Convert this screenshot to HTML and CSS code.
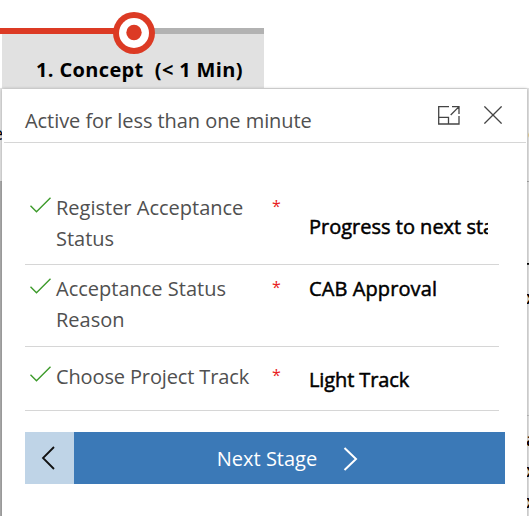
FILE: index.html
```html
<!DOCTYPE html>
<html lang="en">
<head>
    <meta charset="UTF-8">
    <title>Business Process Flow</title>
    <link rel="stylesheet" href="styles.css">
</head>
<body>
    <div class="process-bar">
        <div class="track">
            <div class="track-done"></div>
            <div class="track-rest"></div>
            <svg class="stage-marker" width="42" height="42" viewBox="0 0 42 42">
                <circle cx="21" cy="21" r="21" fill="#dc3a24"/>
                <circle cx="21" cy="21" r="15" fill="#fff"/>
                <circle cx="21" cy="20.5" r="7.7" fill="#dc3a24"/>
            </svg>
        </div>
        <div class="stage"><span class="stage-name">1. Concept&nbsp; (&lt; 1 Min)</span></div>
    </div>

    <div class="form-behind">
        <div class="form-header"><span>e</span><span>e</span></div>
        <div class="form-section">
            <span class="peek peek-1">T</span>
            <span class="peek peek-2">x</span>
            <div class="section-line"></div>
            <span class="peek peek-3">a</span>
            <span class="peek peek-4">x</span>
            <span class="peek peek-5">x</span>
        </div>
    </div>

    <div class="flyout">
        <div class="flyout-header">
            <h1>Active for less than one minute</h1>
            <div class="flyout-actions">
                <svg width="22" height="19" viewBox="0 0 22 19" fill="none" stroke="#444" stroke-width="1.3">
                    <path d="M11 .7H.7V18H21V10M.7 11.3H10.5V18M14 .7H21V8M20.8 .9L12.7 9"/>
                </svg>
                <svg width="18" height="18" viewBox="0 0 18 18" fill="none" stroke="#444" stroke-width="1.3">
                    <path d="M.4 .4L17.6 17.6M17.6 .4L.4 17.6"/>
                </svg>
            </div>
        </div>

        <div class="fields">
            <div class="field">
                <svg class="check" width="21" height="16" viewBox="0 0 21 16" fill="none" stroke="#3c9a2a" stroke-width="1.4">
                    <path d="M.5 8.7L6.5 14.7L20.5 .7"/>
                </svg>
                <label><span>Register Acceptance</span> <span>Status</span></label>
                <span class="required">*</span>
                <div class="value value-low">Progress to next stage</div>
            </div>
            <div class="field field-up">
                <svg class="check" width="21" height="16" viewBox="0 0 21 16" fill="none" stroke="#3c9a2a" stroke-width="1.4">
                    <path d="M.5 8.7L6.5 14.7L20.5 .7"/>
                </svg>
                <label><span>Acceptance Status</span> <span>Reason</span></label>
                <span class="required">*</span>
                <div class="value value-cab">CAB Approval</div>
            </div>
            <div class="field field-short">
                <svg class="check" width="21" height="16" viewBox="0 0 21 16" fill="none" stroke="#3c9a2a" stroke-width="1.4">
                    <path d="M.5 8.7L6.5 14.7L20.5 .7"/>
                </svg>
                <label class="label-track"><span>Choose Project Track</span></label>
                <span class="required">*</span>
                <div class="value value-mid">Light Track</div>
            </div>
        </div>

        <div class="stage-nav">
            <button class="back" aria-label="Back">
                <svg width="14" height="24" viewBox="0 0 14 24" fill="none" stroke="#111" stroke-width="1.8">
                    <path d="M13 1L2 12L13 23"/>
                </svg>
            </button>
            <button class="next">
                <span>Next Stage</span>
                <svg width="15" height="24" viewBox="0 0 15 24" fill="none" stroke="#fff" stroke-width="2">
                    <path d="M1.5 1L13 12L1.5 23"/>
                </svg>
            </button>
        </div>
    </div>
</body>
</html>
```

FILE: styles.css
```css
* {
    box-sizing: border-box;
    margin: 0;
    padding: 0;
}

body {
    position: relative;
    width: 529px;
    height: 516px;
    overflow: hidden;
    background: #fff;
    font-family: "Open Sans", "Noto Sans", sans-serif;
    font-size: 20px;
    color: #505050;
}

.process-bar {
    height: 88px;
    padding-top: 28px;
}

.track {
    position: relative;
    display: flex;
    width: 264px;
    height: 6px;
}

.track-done {
    width: 134px;
    background: #dc3a24;
}

.track-rest {
    flex: 1;
    background: #b2b2b2;
}

.stage-marker {
    position: absolute;
    left: 113px;
    top: -16px;
}

.stage {
    width: 262px;
    height: 54px;
    margin-left: 2px;
    padding: 20px 0 0 34px;
    background: #e1e1e1;
    color: #000;
    font-weight: 700;
    line-height: 32px;
    letter-spacing: 0.36px;
    white-space: pre;
}

.form-behind {
    height: 428px;
    color: #000;
    background: #e4e4e4;
}

.form-header {
    display: flex;
    justify-content: space-between;
    height: 93px;
    padding-top: 33px;
    margin: 0 -9px 0 -7px;
    line-height: 24px;
    font-size: 18px;
}

.form-section {
    position: relative;
    height: 335px;
    border-top: 1px solid #a8a8a8;
    border-left: 2px solid #adadad;
}

.section-line {
    height: 234px;
    border-bottom: 1px solid #c0c0c0;
}

/* form text that runs out from under the flyout */
.peek {
    position: absolute;
    left: 524px;
    font-size: 18px;
    font-weight: 600;
    line-height: 24px;
}

.peek-1 { top: 75px; }
.peek-2 { top: 103px; }
.peek-3 { top: 245px; }
.peek-4 { top: 276px; }
.peek-5 { top: 307px; }

.flyout {
    position: absolute;
    left: 2px;
    top: 89px;
    width: 525px;
    height: 440px;
    background: #fff;
    box-shadow: 0 0 3px rgba(0, 0, 0, 0.3);
}

.flyout-header {
    display: flex;
    justify-content: space-between;
    align-items: flex-start;
    height: 54px;
    margin: 0 1px 0 2px;
    padding: 16px 24px 0 21px;
    border-bottom: 1px solid #d6d6d6;
}

.flyout-header h1 {
    font-size: 20px;
    font-weight: 400;
    line-height: 32px;
    letter-spacing: -0.06px;
    white-space: nowrap;
}

.flyout-actions {
    display: flex;
    align-items: center;
    gap: 24px;
    height: 20px;
}

.fields {
    width: 474px;
    margin: 40px 0 0 23px;
}

.field {
    display: grid;
    grid-template-columns: 31px 216px 37px 179px;
    height: 82px;
    padding-top: 9px;
    border-bottom: 1px solid #d6d6d6;
}

.field-up {
    padding-top: 8px;
}

.field-short {
    height: 64px;
    padding-top: 14px;
}

.check {
    margin: 5px 0 0 5px;
}

.field label {
    line-height: 31px;
}

.field label span {
    display: block;
    white-space: nowrap;
}

.field .label-track {
    letter-spacing: -0.13px;
}

.required {
    color: #e81c1c;
    font-size: 16px;
    line-height: 28px;
}

.value {
    overflow: hidden;
    height: 31px;
    color: #000;
    line-height: 31px;
    white-space: nowrap;
    -webkit-text-stroke: 0.5px #000;
}

.value-cab {
    letter-spacing: 0.1px;
}

.value-low {
    margin-top: 19px;
}

.value-mid {
    margin-top: 3px;
    letter-spacing: -0.1px;
}

.stage-nav {
    display: flex;
    width: 480px;
    height: 52px;
    margin: 21px 0 0 23px;
}

.stage-nav button {
    display: flex;
    align-items: center;
    justify-content: center;
    border: none;
    font: inherit;
}

.stage-nav .back {
    width: 49px;
    padding-right: 3px;
    background: #bfd4e7;
}

.stage-nav .next {
    flex: 1;
    gap: 26px;
    padding: 1px 4px 0 0;
    background: #3b79b7;
    color: #fff;
}
```
